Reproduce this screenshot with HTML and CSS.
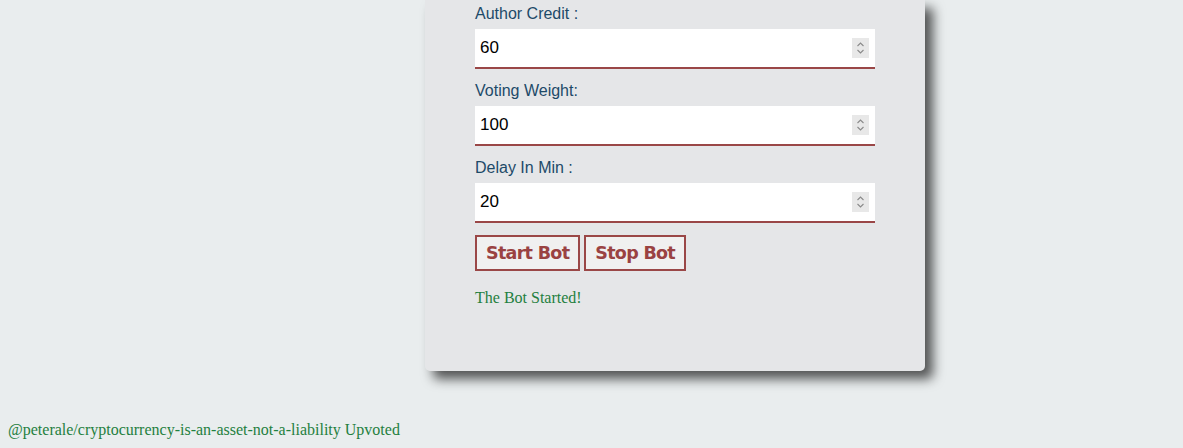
FILE: index.html
```html
<!DOCTYPE html>
<html>
<head>
<meta charset="utf-8">
<link rel="stylesheet" href="styles.css">
</head>
<body>
<div class="card">
  <label class="lbl">Author Credit :</label>
  <div class="field"><span class="val">60</span><span class="spin"><svg width="17" height="20" viewBox="0 0 17 20"><path d="M5.5 8 L8.5 5 L11.5 8" fill="none" stroke="#8a8a8a" stroke-width="1.1"/><path d="M5.5 12 L8.5 15 L11.5 12" fill="none" stroke="#8a8a8a" stroke-width="1.1"/></svg></span></div>
  <label class="lbl">Voting Weight:</label>
  <div class="field"><span class="val">100</span><span class="spin"><svg width="17" height="20" viewBox="0 0 17 20"><path d="M5.5 8 L8.5 5 L11.5 8" fill="none" stroke="#8a8a8a" stroke-width="1.1"/><path d="M5.5 12 L8.5 15 L11.5 12" fill="none" stroke="#8a8a8a" stroke-width="1.1"/></svg></span></div>
  <label class="lbl">Delay In Min :</label>
  <div class="field"><span class="val">20</span><span class="spin"><svg width="17" height="20" viewBox="0 0 17 20"><path d="M5.5 8 L8.5 5 L11.5 8" fill="none" stroke="#8a8a8a" stroke-width="1.1"/><path d="M5.5 12 L8.5 15 L11.5 12" fill="none" stroke="#8a8a8a" stroke-width="1.1"/></svg></span></div>
  <div class="btns">
    <button class="btn">Start Bot</button>
    <button class="btn">Stop Bot</button>
  </div>
  <p class="status">The Bot Started!</p>
</div>
<p class="log">@peterale/cryptocurrency-is-an-asset-not-a-liability Upvoted</p>
</body>
</html>
```
FILE: styles.css
```css
html, body { margin: 0; padding: 0; }
body {
  background: #e9edee;
  width: 1183px;
  height: 448px;
  overflow: hidden;
}
.card {
  width: 400px;
  margin-left: 425px;
  padding: 4px 50px 0 50px;
  height: 367px;
  box-sizing: content-box;
  background: #e5e6e8;
  border-radius: 0 0 5px 5px;
  box-shadow: 8px 8px 12px rgba(0,0,0,0.65);
  display: flex;
  flex-direction: column;
}
.lbl {
  display: block;
  font-family: "Liberation Sans", Arial, sans-serif;
  font-size: 16px;
  line-height: 20px;
  color: #1d4a68;
  height: 25px;
}
.field {
  height: 38px;
  background: #fff;
  border-bottom: 2px solid #9a4747;
  display: flex;
  align-items: center;
  justify-content: space-between;
  padding: 0 6px 0 5px;
  margin-bottom: 12px;
}
.val {
  font-family: "Liberation Sans", Arial, sans-serif;
  font-size: 17px;
  color: #000;
}
.spin {
  width: 17px;
  height: 20px;
  background: #e8e8e8;
  display: flex;
}
.btns {
  display: flex;
  gap: 4px;
}
.btn {
  font-family: "DejaVu Sans", Verdana, sans-serif;
  font-weight: bold;
  font-size: 17.5px;
  color: #9a4242;
  background: #f0f0f0;
  border: 2px solid #9a4747;
  height: 36px;
  padding: 0 9px;
  letter-spacing: -0.7px;
}
.status {
  font-family: "Liberation Serif", "Times New Roman", serif;
  font-size: 16px;
  color: #1f8040;
  margin: 18px 0 0 0;
}
.log {
  font-family: "Liberation Serif", "Times New Roman", serif;
  font-size: 16px;
  color: #1f8040;
  margin: 50px 0 0 8px;
}
```
